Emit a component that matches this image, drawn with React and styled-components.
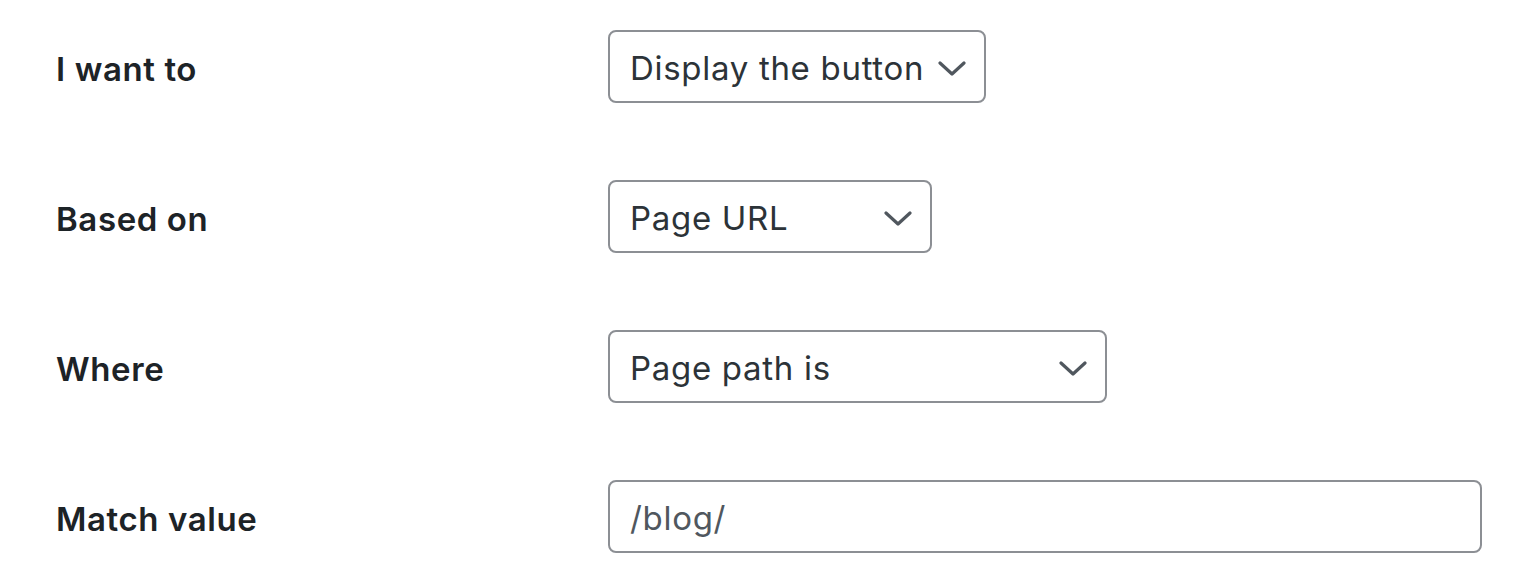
import React from "react";
import styled, { createGlobalStyle } from "styled-components";

const GlobalStyle = createGlobalStyle`
  html, body {
    margin: 0;
    padding: 0;
    background: #ffffff;
  }
  body {
    font-family: Inter, "Noto Sans", "Liberation Sans", sans-serif;
    color: #1d2327;
  }
`;

const Form = styled.div`
  display: flex;
  flex-direction: column;
  gap: 77px;
  padding: 30px 0 0 56px;
`;

const Row = styled.div`
  display: grid;
  grid-template-columns: 552px 1fr;
  align-items: center;
  height: 73px;
`;

const Label = styled.label`
  padding-top: 4px;
  font-size: 33px;
  font-weight: 600;
  color: #1d2327;
  letter-spacing: 0.6px;
`;

const Select = styled.div`
  box-sizing: border-box;
  width: ${(p) => p.width}px;
  height: 73px;
  display: flex;
  align-items: center;
  justify-content: space-between;
  padding: 3px 18px 0 20px;
  border: 2px solid #8c8f94;
  border-radius: 8px;
  font-size: 33px;
  letter-spacing: 0.7px;
  color: #2c3338;
`;

const Input = styled.div`
  box-sizing: border-box;
  width: 874px;
  height: 73px;
  display: flex;
  align-items: center;
  padding: 3px 20px 0;
  border: 2px solid #8c8f94;
  border-radius: 8px;
  font-size: 33px;
  letter-spacing: 0.7px;
  color: #50575e;
`;

const Chevron = () => (
  <svg width="28" height="28" viewBox="0 0 28 28" fill="none">
    <path
      d="M2 9 L14 20 L26 9"
      stroke="#50575e"
      strokeWidth="3.2"
      strokeLinecap="round"
      strokeLinejoin="round"
    />
  </svg>
);

const fields = [
  { label: "I want to", value: "Display the button", width: 378 },
  { label: "Based on", value: "Page URL", width: 324 },
  { label: "Where", value: "Page path is", width: 499 },
];

export default function App() {
  return (
    <>
      <GlobalStyle />
      <Form>
        {fields.map((f) => (
          <Row key={f.label}>
            <Label>{f.label}</Label>
            <Select width={f.width}>
              <span>{f.value}</span>
              <Chevron />
            </Select>
          </Row>
        ))}
        <Row>
          <Label>Match value</Label>
          <Input>/blog/</Input>
        </Row>
      </Form>
    </>
  );
}
